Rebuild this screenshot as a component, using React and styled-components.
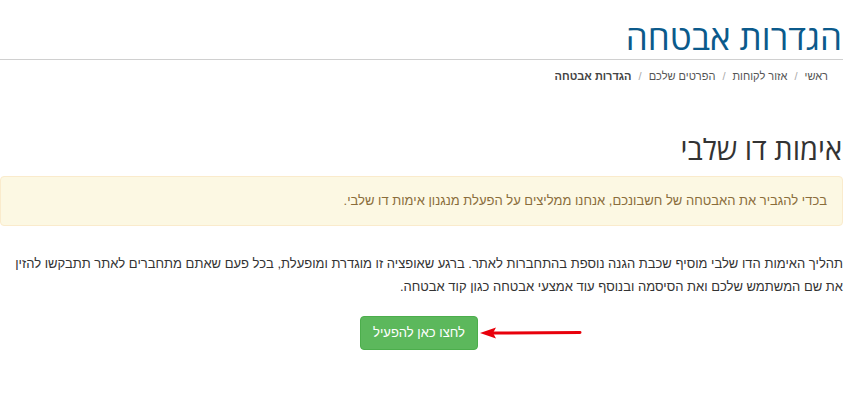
import React from "react";
import styled, { createGlobalStyle } from "styled-components";

const Global = createGlobalStyle`
  html, body { margin: 0; padding: 0; background: #fff; overflow: hidden; }
  body { font-family: "Liberation Sans", Arial, sans-serif; color: #333; }
`;

const Page = styled.div`
  direction: rtl;
  padding-right: 25px;
  width: 843px;
`;

const Container = styled.div`
  width: 848px;
`;

const Title = styled.h1`
  margin: 0;
  padding-top: 14px;
  padding-right: 1px;
  font-family: "Open Sans", "Liberation Sans", sans-serif;
  font-size: 35px;
  font-weight: 400;
  line-height: 45px;
  color: #0b5a8b;
`;

const Rule = styled.hr`
  margin: 0;
  border: 0;
  border-top: 1px solid #d0d0d0;
`;

const Crumbs = styled.ol`
  list-style: none;
  margin: 0;
  padding: 8px 15px 0 0;
  display: flex;
  font-size: 11px;
  line-height: 16px;
  color: #555;
  & > li + li::before {
    content: "/";
    color: #aaa;
    padding: 0 7px;
    font-weight: 400;
  }
`;

const Crumb = styled.li`
  font-weight: ${(p) => (p.$active ? 700 : 400)};
  color: ${(p) => (p.$active ? "#444" : "#555")};
`;

const SubTitle = styled.h2`
  margin: 46px 0 0;
  padding-right: 1px;
  font-family: "Open Sans", "Liberation Sans", sans-serif;
  font-size: 29px;
  font-weight: 400;
  line-height: 38px;
  color: #333;
`;

const Alert = styled.div`
  margin-top: 8px;
  width: 843px;
  box-sizing: border-box;
  padding: 15px 15px;
  background: #fcf8e3;
  border: 1px solid #faebcc;
  border-radius: 4px;
  color: #8a6d3b;
  font-size: 13px;
  line-height: 18px;
`;

const Para = styled.p`
  margin: 26px 0 0;
  font-size: 13px;
  line-height: 23px;
  color: #333;
`;

const ButtonRow = styled.div`
  margin-top: 18px;
  display: flex;
  justify-content: center;
`;

const ButtonWrap = styled.div`
  position: relative;
`;

const Button = styled.button`
  direction: rtl;
  font-family: inherit;
  font-size: 13px;
  line-height: 20px;
  padding: 6px 12px;
  color: #fff;
  background: #5cb85c;
  border: 1px solid #4cae4c;
  border-radius: 4px;
  cursor: pointer;
`;

const Arrow = styled.svg`
  position: absolute;
  top: 50%;
  left: 100%;
  margin-top: -6px;
  margin-left: 2px;
`;

export default function App() {
  return (
    <>
      <Global />
      <Page>
        <Container>
          <Title>הגדרות אבטחה</Title>
          <Rule />
          <Crumbs>
            <Crumb>ראשי</Crumb>
            <Crumb>אזור לקוחות</Crumb>
            <Crumb>הפרטים שלכם</Crumb>
            <Crumb $active>הגדרות אבטחה</Crumb>
          </Crumbs>
          <SubTitle>אימות דו שלבי</SubTitle>
          <Alert>בכדי להגביר את האבטחה של חשבונכם, אנחנו ממליצים על הפעלת מנגנון אימות דו שלבי.</Alert>
          <Para>
            תהליך האימות הדו שלבי מוסיף שכבת הגנה נוספת בהתחברות לאתר. ברגע שאופציה זו מוגדרת ומופעלת, בכל פעם שאתם מתחברים לאתר תתבקשו להזין את שם המשתמש שלכם ואת הסיסמה ובנוסף עוד אמצעי אבטחה כגון קוד אבטחה.
          </Para>
          <ButtonRow>
            <ButtonWrap>
              <Button>לחצו כאן להפעיל</Button>
              <Arrow width="102" height="12" viewBox="0 0 102 12">
                <line x1="12" y1="6" x2="100" y2="5.5" stroke="#e8000b" strokeWidth="3" strokeLinecap="round" />
                <polygon points="0,6 16,0.5 13,6 16,11.5" fill="#e8000b" />
              </Arrow>
            </ButtonWrap>
          </ButtonRow>
        </Container>
      </Page>
    </>
  );
}
